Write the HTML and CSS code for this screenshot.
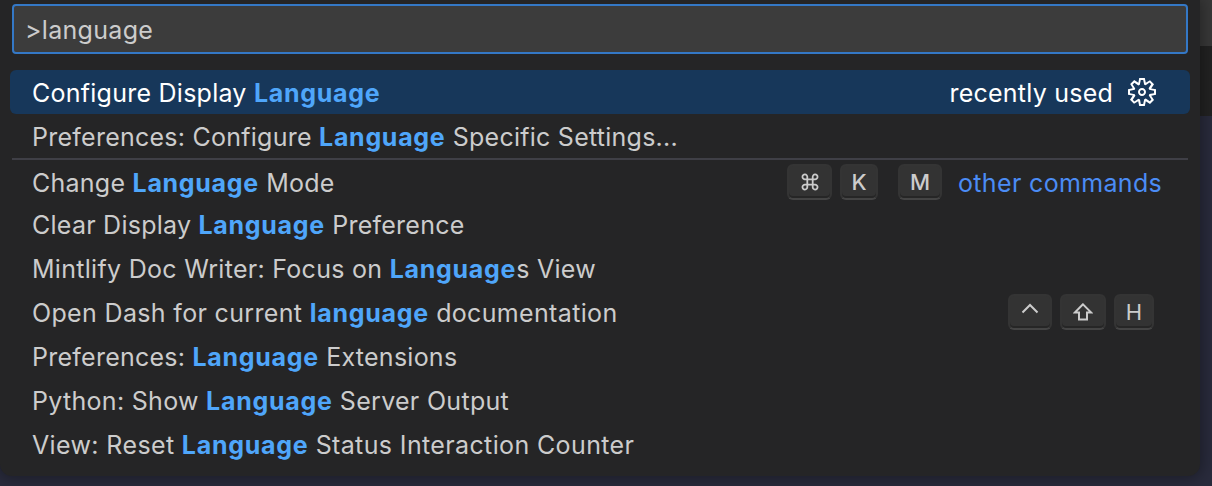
FILE: index.html
```html
<!DOCTYPE html>
<html lang="en">
<head>
<meta charset="utf-8">
<title>Command Palette</title>
<link rel="stylesheet" href="styles.css">
</head>
<body>
<main class="palette">
  <div class="search">&gt;language</div>
  <div class="list">
    <div class="row selected"><span class="label l1">Configure Display <b>Language</b></span>
      <span class="recent">recently used</span>
      <svg class="gear" viewBox="0 0 16 16"><path fill-rule="evenodd" d="M9.1 4.4L8.6 2H7.4l-.5 2.4-.7.3-2-1.3-.9.8 1.3 2-.2.7-2.4.5v1.2l2.4.5.3.8-1.3 2 .8.8 2-1.3.8.3.4 2.3h1.2l.5-2.4.8-.3 2 1.3.8-.8-1.3-2 .3-.8 2.3-.4V7.4l-2.4-.5-.3-.8 1.3-2-.8-.8-2 1.3-.7-.2zM9.4 1l.5 2.4L12 2.1l2 2-1.4 2.1 2.4.4v2.8l-2.4.5L14 12l-2 2-2.1-1.4-.5 2.4H6.6l-.5-2.4L4 13.9l-2-2 1.4-2.1L1 9.4V6.6l2.4-.5L2.1 4l2-2 2.1 1.4.4-2.4h2.8zm.6 7c0 1.100-.9 2-2 2s-2-.9-2-2 .9-2 2-2 2 .9 2 2zM8 9c.6 0 1-.4 1-1s-.4-1-1-1-1 .4-1 1 .4 1 1 1z"/></svg>
    </div>
    <div class="row"><span class="label l2">Preferences: Configure <b>Language</b> Specific Settings...</span></div>
    <div class="row separated"><span class="label l3">Change <b>Language</b> Mode</span>
      <span class="keys">
        <kbd class="key command"><svg viewBox="0 0 20 20"><path d="M7 7H4.500A2.700 2.700 0 1 1 7 4.500V15.500A2.700 2.700 0 1 1 4.500 13H15.500A2.700 2.700 0 1 1 13 15.500V4.500A2.700 2.700 0 1 1 15.500 7Z"/></svg></kbd>
        <kbd class="key k">K</kbd>
        <kbd class="key m">M</kbd>
      </span>
      <span class="group">other commands</span>
    </div>
    <div class="row"><span class="label l4">Clear Display <b>Language</b> Preference</span></div>
    <div class="row"><span class="label l5">Mintlify Doc Writer: Focus on <b>Language</b>s View</span></div>
    <div class="row"><span class="label l6">Open Dash for current <b>language</b> documentation</span>
      <span class="keys last">
        <kbd class="key control"><svg viewBox="0 0 20 20"><path d="M2.500 10.500L10 3l7.500 7.500"/></svg></kbd>
        <kbd class="key shift"><svg viewBox="0 0 20 20"><path d="M10 2.300L1.800 10.500H6V17.500H14V10.500H18.200Z"/></svg></kbd>
        <kbd class="key h">H</kbd>
      </span>
    </div>
    <div class="row"><span class="label l7">Preferences: <b>Language</b> Extensions</span></div>
    <div class="row"><span class="label l8">Python: Show <b>Language</b> Server Output</span></div>
    <div class="row"><span class="label l9">View: Reset <b>Language</b> Status Interaction Counter</span></div>
  </div>
</main>
</body>
</html>
```
FILE: styles.css
```css
* { box-sizing: border-box; }
body {
  margin: 0;
  height: 486px;
  overflow: hidden;
  background: linear-gradient(#383838 0 46px, #222222 46px 116px, #292b3c 116px);
  color: #cccccc;
  font: 25px/44px Inter, "Liberation Sans", sans-serif;
}
.palette {
  width: 1200px;
  height: 476px;
  padding: 4px 10px 0;
  background: #252526;
  border-radius: 0 0 12px 12px;
  box-shadow: 0 0 16px 2px rgba(0, 0, 0, .36);
}
.search {
  height: 50px;
  margin: 0 2px 16px;
  padding-left: 11px;
  border: 2px solid #3478c6;
  border-radius: 4px;
  background: #3c3c3c;
  line-height: 48px;
  letter-spacing: .3px;
}
.row {
  display: flex;
  align-items: center;
  height: 44px;
  padding-left: 22px;
  white-space: pre;
}
.selected { background: #17375a; border-radius: 6px; color: #fff; }
.separated {
  background: linear-gradient(#3f3f46, #3f3f46) 2px 0 / 1176px 2px no-repeat;
  padding-top: 4px;
}
.label { flex: 1; padding-top: 2px; letter-spacing: .25px; }
.label b { color: #4fa6fa; font-weight: 700; letter-spacing: .7px; }
.l5 { letter-spacing: .29px; }
.l6 { letter-spacing: .34px; }
.l8 { letter-spacing: .3px; }
.l9 { letter-spacing: .37px; }
.recent { padding-top: 2px; letter-spacing: .23px; }
.gear { width: 32px; height: 32px; margin: 0 32px 0 13px; fill: currentColor; }
.group { width: 204px; color: #4b8cf5; margin: 0 28px 0 16px; padding-top: 2px; letter-spacing: .34px; }
.keys { display: flex; gap: 8px; }
.last { margin-right: 36px; }
.key {
  display: flex;
  align-items: center;
  justify-content: center;
  height: 36px;
  border: 2px solid #343434;
  border-bottom-color: #444;
  border-radius: 6px;
  background: #333;
  box-shadow: inset 0 -2px 0 #262626;
  font: 500 22px/32px Inter, "Liberation Sans", sans-serif;
}
.key svg { width: 20px; height: 20px; fill: none; stroke: currentColor; stroke-width: 2; }
.command { width: 45px; }
.command svg { width: 18px; height: 18px; }
.k { width: 38px; }
.m { width: 44px; margin-left: 12px; }
.control { width: 44px; }
.shift { width: 46px; }
.h { width: 40px; font-weight: 400; }
```
